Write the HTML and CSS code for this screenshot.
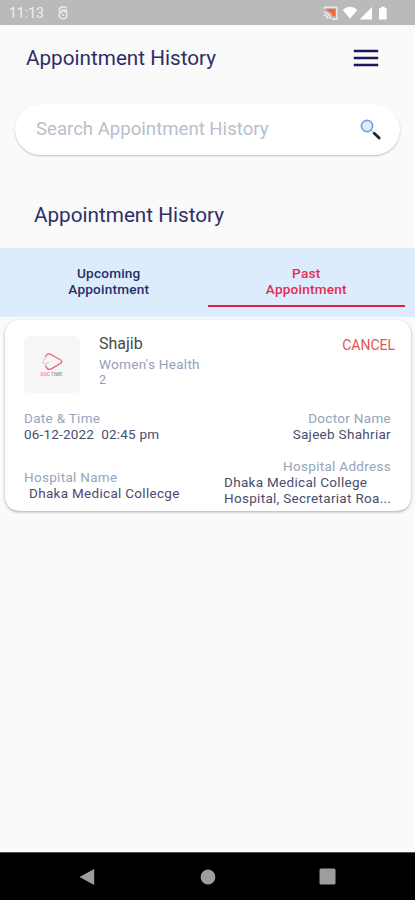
FILE: index.html
```html
<!DOCTYPE html>
<html lang="en">
<head>
<meta charset="utf-8">
<title>Appointment History</title>
<link rel="stylesheet" href="styles.css">
</head>
<body>
<div class="screen">
  <div class="status">
    <span class="clock">11:13</span>
    <svg class="notice" width="12" height="14" viewBox="0 0 12 14" fill="none" stroke="#ececec" stroke-width="1.5"><path d="M9.5 2C7-.3 2.3.9 2.3 4c0 1.6 1.2 2.6 2.4 3"/><circle cx="6" cy="9" r="3.9"/><path d="M4.8 3.9h4.4v2.5M4.8 9h2.4"/></svg>
    <svg class="signals" width="66" height="15" viewBox="0 0 66 15">
      <path d="M1.5 3V1.3h12.3v11.8H9" fill="none" stroke="#e8e8e8" stroke-width="1.6"/>
      <path d="M3.5 3h9v7.2H9.7C9 7 6.8 5.2 3.5 4.2z" fill="#f9643b"/>
      <path d="M.9 6.4a6.8 6.8 0 0 1 6.6 6.7M.9 9.2a4 4 0 0 1 3.9 3.9" fill="none" stroke="#eee" stroke-width="1.4"/>
      <path d="M19.7 3.7Q27-2 34.3 3.7L27 12.8z" fill="#fff"/>
      <path d="M36.5 13.4 49 1v12.4z" fill="#fff"/>
      <path d="M56 2.2h2V.8h3.7v1.4h2v11.2H56z" fill="#fff"/>
    </svg>
  </div>
  <header class="header">
    <h1 class="title">Appointment History</h1>
    <svg width="26" height="18" viewBox="0 0 26 18" stroke="#19195c" stroke-width="2.3"><path d="M.8 2h24.4M.8 9h24.4M.8 16h24.4"/></svg>
  </header>
  <div class="search">
    <span class="placeholder">Search Appointment History</span>
    <svg width="23" height="23" viewBox="0 0 23 23"><circle cx="8" cy="8" r="5.6" fill="#e7eaf0" stroke="#68a3f6" stroke-width="1.6"/><path d="m12 12 3 3" stroke="#999" stroke-width="1"/><path d="m15.2 15.2 5 4.8" stroke="#1d2529" stroke-width="2.8" stroke-linecap="round"/></svg>
  </div>
  <h2 class="title section">Appointment History</h2>
  <div class="tabs">
    <div class="tab">Upcoming<br>Appointment</div>
    <div class="tab active">Past<br>Appointment</div>
  </div>
  <article class="card">
    <div class="person">
      <div class="logo">
        <svg width="28" height="28" viewBox="0 0 28 28"><path d="M7.5 6Q9 1.5 13 3.5l9 5q3.5 2 0 4.2l-9 5.3q-4 1.5-5.5-3.5" fill="none" stroke="#ee6680" stroke-width="1.4"/><path d="M8.5 7.3q-3.5.2-3.5 3t3.5 3M8 13l3-2" fill="none" stroke="#c4c8ca" stroke-width="1"/><text x="2.5" y="25" class="logo-red">DOC</text><text x="13" y="25" class="logo-gray">TIME</text></svg>
      </div>
      <div class="who"><div class="name">Shajib</div><div class="specialty">Women's Health</div><div class="count">2</div></div>
      <div class="cancel">CANCEL</div>
    </div>
    <div class="row">
      <div><div class="label">Date &amp; Time</div><div class="value date">06-12-2022&nbsp; 02:45 pm</div></div>
      <div class="right"><div class="label">Doctor Name</div><div class="value">Sajeeb Shahriar</div></div>
    </div>
    <div class="row place">
      <div class="hospital"><div class="label">Hospital Name</div><div class="value indent">Dhaka Medical Collecge</div></div>
      <div class="address"><div class="label right">Hospital Address</div><div class="value">Dhaka Medical College<br>Hospital, Secretariat Roa...</div></div>
    </div>
  </article>
  <nav class="nav">
    <svg width="16" height="18" viewBox="0 0 16 18"><path d="M.5 9 15.2 1v16z" fill="#9e9e9e"/></svg>
    <svg class="home" width="16" height="16" viewBox="0 0 16 16"><circle cx="8" cy="8" r="7.4" fill="#9e9e9e"/></svg>
    <svg width="17" height="17" viewBox="0 0 17 17"><rect x=".5" y=".5" width="16" height="16" rx="1.5" fill="#9e9e9e"/></svg>
  </nav>
</div>
</body>
</html>
```
FILE: styles.css
```css
* { box-sizing: border-box; }
body { margin: 0; font-family: Roboto, "Liberation Sans", sans-serif; background: #fafafa; }
svg { display: block; flex: none; }
.screen { width: 415px; height: 900px; display: flex; flex-direction: column; overflow: hidden; }
.status { height: 25px; flex: none; background: #bababa; display: flex; align-items: center; padding: 1px 26px 0 9px; }
.clock { color: #eee; font-size: 14px; width: 48px; }
.signals { margin-left: auto; }
.header { height: 65px; flex: none; display: flex; align-items: center; justify-content: space-between; padding: 0 36px 0 26px; }
.title { margin: 0; font-size: 20.7px; line-height: 26px; font-weight: 400; color: #2d2e66; }
.search { height: 51px; flex: none; margin: 14px 15px 0; padding: 0 18px 0 21px; border-radius: 26px; background: #fff; box-shadow: 0 1px 2px #0000003d; display: flex; align-items: center; justify-content: space-between; }
.placeholder { font-size: 18.6px; line-height: 22px; padding-bottom: 2px; color: #b6c0ce; }
.section { margin: 47px 0 20px 34px; }
.tabs { height: 69px; flex: none; background: #dcecfc; display: flex; padding: 0 10px; }
.tab { flex: 1; height: 59px; padding-top: 17px; text-align: center; font-size: 13.6px; line-height: 16px; font-weight: 500; letter-spacing: .2px; color: #292e68; }
.tab.active { color: #e52b50; border-bottom: 2px solid #e91e45; }
.card { height: 191px; flex: none; margin: 3px 4px 0 5px; padding: 0 20px 0 19px; border-radius: 14px; background: #fff; box-shadow: 0 1px 3px #00000052; }
.person { display: flex; height: 90px; padding-top: 16px; }
.logo { width: 56px; height: 57px; flex: none; border-radius: 5px; background: #f6f6f6; display: flex; align-items: center; justify-content: center; }
.logo-red, .logo-gray { font-size: 4.8px; font-weight: 500; fill: #f08595; }
.logo-gray { fill: #8f9697; }
.who { margin-left: 19px; }
.name { font-size: 16px; line-height: 16px; color: #484848; }
.specialty, .count { font-size: 13.6px; line-height: 16px; letter-spacing: .25px; color: #92a1b8; }
.specialty { margin-top: 4px; }
.count { font-size: 12.5px; line-height: 15px; }
.cancel { margin: 1px -4px 0 auto; font-size: 14px; line-height: 17px; color: #e9524f; }
.row { display: flex; justify-content: space-between; font-size: 13.5px; line-height: 16px; letter-spacing: .3px; }
.label { color: #96a4ba; }
.value { color: #4c4c6e; }
.date { letter-spacing: .2px; }
.right { text-align: right; }
.place { margin-top: 16px; }
.hospital { padding-top: 11px; }
.indent { margin-left: 5px; }
.address { width: 167px; white-space: nowrap; }
.nav { height: 48px; flex: none; margin-top: auto; background: #000; border-top: 1px solid #555; display: flex; align-items: center; justify-content: space-between; padding: 0 79px; }
.home { margin-left: 1px; }
```
